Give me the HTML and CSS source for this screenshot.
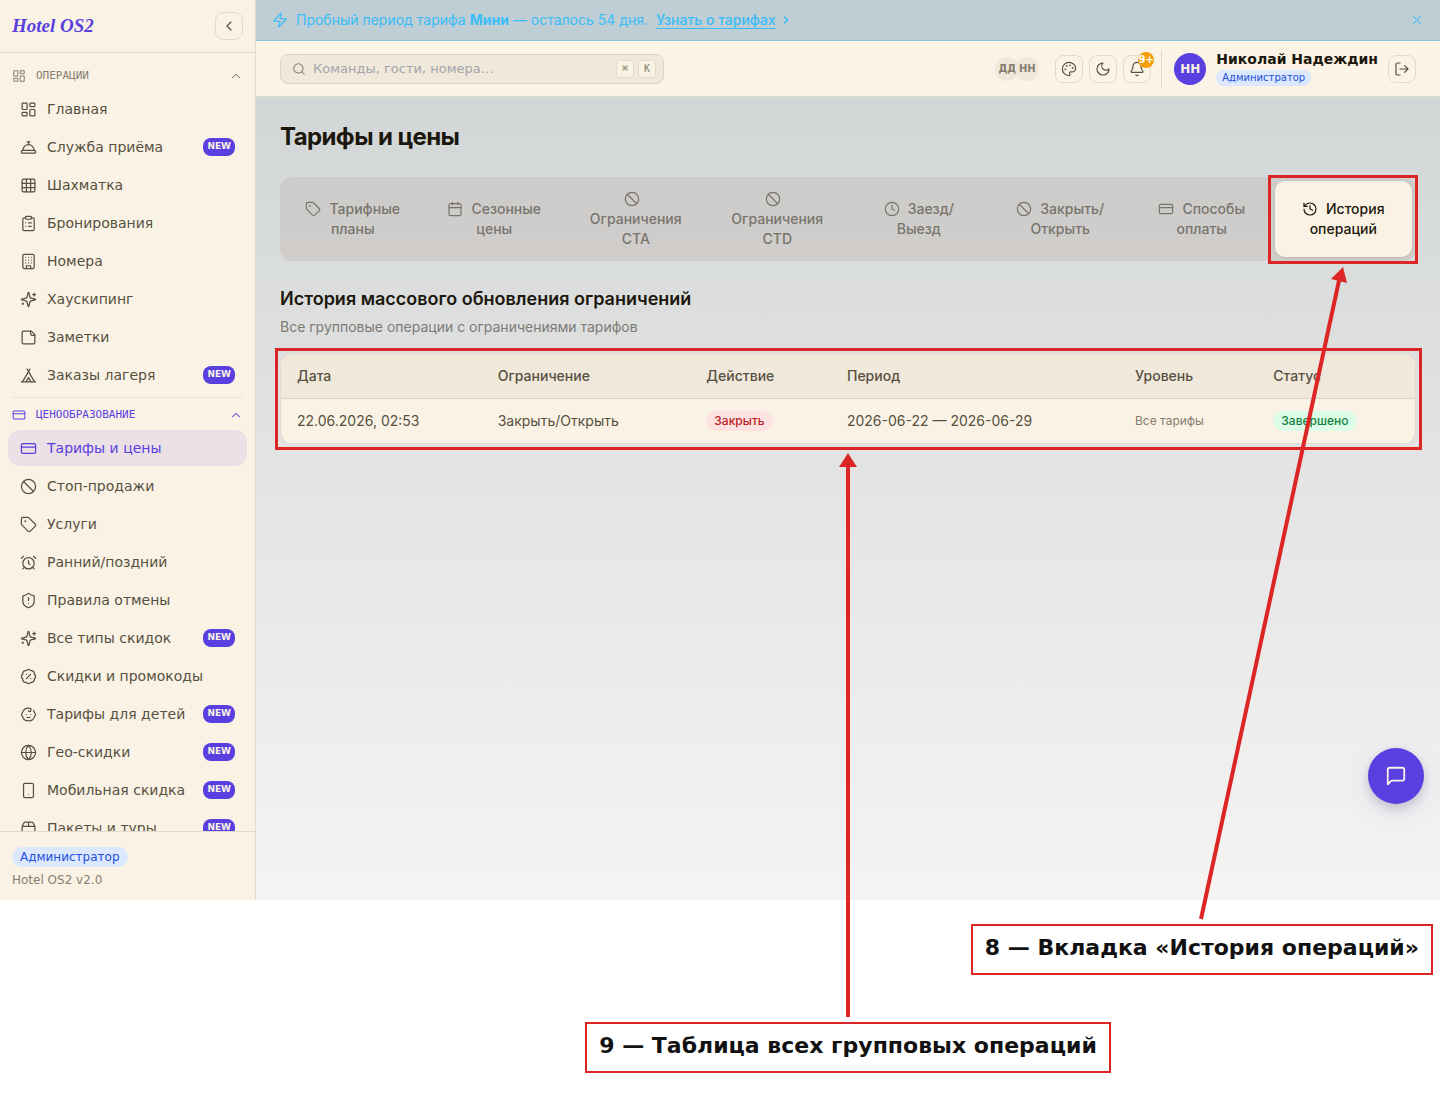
FILE: index.html
```html
<!DOCTYPE html>
<html lang="ru">
<head>
  <meta charset="UTF-8" />
  <meta name="viewport" content="width=device-width, initial-scale=1.0"/>
  <title>Тарифы и цены — Hotel OS2</title>
  <link rel="stylesheet" href="styles.css">
</head>
<body>

  <!-- Icon sprite -->
  <svg class="sprite" aria-hidden="true">
    <symbol id="i-dashboard" viewBox="0 0 24 24"><rect width="7" height="9" x="3" y="3" rx="1"/><rect width="7" height="5" x="14" y="3" rx="1"/><rect width="7" height="9" x="14" y="12" rx="1"/><rect width="7" height="5" x="3" y="16" rx="1"/></symbol>
    <symbol id="i-bell-service" viewBox="0 0 24 24"><path d="M3 20a1 1 0 0 1-1-1v-1a2 2 0 0 1 2-2h16a2 2 0 0 1 2 2v1a1 1 0 0 1-1 1Z"/><path d="M20 16a8 8 0 1 0-16 0"/><path d="M12 4v4"/><path d="M10 4h4"/></symbol>
    <symbol id="i-grid" viewBox="0 0 24 24"><rect width="18" height="18" x="3" y="3" rx="2"/><path d="M3 9h18M3 15h18M9 3v18M15 3v18"/></symbol>
    <symbol id="i-clipboard" viewBox="0 0 24 24"><rect width="8" height="4" x="8" y="2" rx="1"/><path d="M16 4h2a2 2 0 0 1 2 2v14a2 2 0 0 1-2 2H6a2 2 0 0 1-2-2V6a2 2 0 0 1 2-2h2"/><path d="M12 11h4M12 16h4M8 11h.01M8 16h.01"/></symbol>
    <symbol id="i-hotel" viewBox="0 0 24 24"><rect width="16" height="20" x="4" y="2" rx="2"/><path d="M9 22v-4h6v4M8 6h.01M16 6h.01M12 6h.01M12 10h.01M12 14h.01M16 10h.01M16 14h.01M8 10h.01M8 14h.01"/></symbol>
    <symbol id="i-sparkles" viewBox="0 0 24 24"><path d="M9.937 15.5A2 2 0 0 0 8.5 14.063l-6.135-1.582a.5.5 0 0 1 0-.962L8.5 9.936A2 2 0 0 0 9.937 8.5l1.582-6.135a.5.5 0 0 1 .963 0L14.063 8.5A2 2 0 0 0 15.5 9.937l6.135 1.581a.5.5 0 0 1 0 .964L15.5 14.063a2 2 0 0 0-1.437 1.437l-1.582 6.135a.5.5 0 0 1-.963 0z"/><path d="M20 3v4M22 5h-4M4 17v2M5 18H3"/></symbol>
    <symbol id="i-note" viewBox="0 0 24 24"><path d="M16 3H5a2 2 0 0 0-2 2v14a2 2 0 0 0 2 2h14a2 2 0 0 0 2-2V8Z"/><path d="M15 3v4a2 2 0 0 0 2 2h4"/></symbol>
    <symbol id="i-tent" viewBox="0 0 24 24"><path d="M3.500 21 14 3M20.500 21 10 3M15.500 21 12 15l-3.500 6M2 21h20"/></symbol>
    <symbol id="i-card" viewBox="0 0 24 24"><rect width="20" height="14" x="2" y="5" rx="2"/><path d="M2 10h20"/></symbol>
    <symbol id="i-ban" viewBox="0 0 24 24"><circle cx="12" cy="12" r="10"/><path d="m4.900 4.900 14.200 14.200"/></symbol>
    <symbol id="i-tag" viewBox="0 0 24 24"><path d="M12.586 2.586A2 2 0 0 0 11.172 2H4a2 2 0 0 0-2 2v7.172a2 2 0 0 0 .586 1.414l8.704 8.704a2.426 2.426 0 0 0 3.420 0l6.580-6.580a2.426 2.426 0 0 0 0-3.420z"/><circle cx="7.500" cy="7.500" r=".5" fill="currentColor"/></symbol>
    <symbol id="i-alarm" viewBox="0 0 24 24"><circle cx="12" cy="13" r="8"/><path d="M12 9v4l2 2M5 3 2 6M22 6l-3-3M6.380 18.700 4 21M17.640 18.670 20 21"/></symbol>
    <symbol id="i-shield" viewBox="0 0 24 24"><path d="M20 13c0 5-3.500 7.500-7.660 8.950a1 1 0 0 1-.67-.01C7.500 20.500 4 18 4 13V6a1 1 0 0 1 1-1c2 0 4.500-1.200 6.240-2.720a1.170 1.170 0 0 1 1.520 0C14.510 3.810 17 5 19 5a1 1 0 0 1 1 1z"/><path d="M12 8v4M12 16h.01"/></symbol>
    <symbol id="i-percent" viewBox="0 0 24 24"><path d="M3.850 8.620a4 4 0 0 1 4.780-4.770 4 4 0 0 1 6.740 0 4 4 0 0 1 4.780 4.780 4 4 0 0 1 0 6.740 4 4 0 0 1-4.770 4.780 4 4 0 0 1-6.750 0 4 4 0 0 1-4.780-4.770 4 4 0 0 1 0-6.760Z"/><path d="m15 9-6 6M9 9h.01M15 15h.01"/></symbol>
    <symbol id="i-baby" viewBox="0 0 24 24"><path d="M9 12h.01M15 12h.01M10 16c.5.3 1.200.5 2 .5s1.500-.2 2-.5"/><path d="M19 6.300a9 9 0 0 1 1.800 3.900 2 2 0 0 1 0 3.600 9 9 0 0 1-17.600 0 2 2 0 0 1 0-3.600A9 9 0 0 1 12 3c2 0 3.500 1.100 3.500 2.500s-.9 2.500-2 2.500c-.8 0-1.500-.4-1.500-1"/></symbol>
    <symbol id="i-globe" viewBox="0 0 24 24"><circle cx="12" cy="12" r="10"/><path d="M12 2a14.500 14.500 0 0 0 0 20 14.500 14.500 0 0 0 0-20M2 12h20"/></symbol>
    <symbol id="i-phone" viewBox="0 0 24 24"><rect width="14" height="20" x="5" y="2" rx="2"/><path d="M12 18h.01"/></symbol>
    <symbol id="i-package" viewBox="0 0 24 24"><path d="M12 3v6M16.760 3a2 2 0 0 1 1.800 1.100l2.230 4.479a2 2 0 0 1 .21.891V19a2 2 0 0 1-2 2H5a2 2 0 0 1-2-2V9.472a2 2 0 0 1 .211-.894L5.450 4.100A2 2 0 0 1 7.240 3zM3.054 9.013h17.893"/></symbol>
    <symbol id="i-up" viewBox="0 0 24 24"><path d="m18 15-6-6-6 6"/></symbol>
    <symbol id="i-left" viewBox="0 0 24 24"><path d="m15 18-6-6 6-6"/></symbol>
    <symbol id="i-right" viewBox="0 0 24 24"><path d="m9 18 6-6-6-6"/></symbol>
    <symbol id="i-zap" viewBox="0 0 24 24"><path d="M4 14a1 1 0 0 1-.78-1.630l9.900-10.200a.5.5 0 0 1 .86.460l-1.920 6.020A1 1 0 0 0 13 10h7a1 1 0 0 1 .78 1.630l-9.900 10.200a.5.5 0 0 1-.86-.46l1.920-6.020A1 1 0 0 0 11 14z"/></symbol>
    <symbol id="i-x" viewBox="0 0 24 24"><path d="M18 6 6 18M6 6l12 12"/></symbol>
    <symbol id="i-search" viewBox="0 0 24 24"><circle cx="11" cy="11" r="8"/><path d="m21 21-4.300-4.300"/></symbol>
    <symbol id="i-palette" viewBox="0 0 24 24"><circle cx="13.500" cy="6.500" r=".5" fill="currentColor"/><circle cx="17.500" cy="10.500" r=".5" fill="currentColor"/><circle cx="8.500" cy="7.500" r=".5" fill="currentColor"/><circle cx="6.500" cy="12.500" r=".5" fill="currentColor"/><path d="M12 2C6.500 2 2 6.500 2 12s4.500 10 10 10c.926 0 1.648-.746 1.648-1.688 0-.437-.18-.835-.437-1.125-.29-.289-.438-.652-.438-1.125a1.640 1.640 0 0 1 1.668-1.668h1.996c3.051 0 5.555-2.503 5.555-5.554C21.965 6.012 17.461 2 12 2z"/></symbol>
    <symbol id="i-moon" viewBox="0 0 24 24"><path d="M12 3a6 6 0 0 0 9 9 9 9 0 1 1-9-9Z"/></symbol>
    <symbol id="i-bell" viewBox="0 0 24 24"><path d="M10.268 21a2 2 0 0 0 3.464 0M3.262 15.326A1 1 0 0 0 4 17h16a1 1 0 0 0 .74-1.673C19.410 13.956 18 12.499 18 8A6 6 0 0 0 6 8c0 4.499-1.411 5.956-2.738 7.326"/></symbol>
    <symbol id="i-logout" viewBox="0 0 24 24"><path d="M9 21H5a2 2 0 0 1-2-2V5a2 2 0 0 1 2-2h4M16 17l5-5-5-5M21 12H9"/></symbol>
    <symbol id="i-calendar" viewBox="0 0 24 24"><path d="M8 2v4M16 2v4M3 10h18"/><rect width="18" height="18" x="3" y="4" rx="2"/></symbol>
    <symbol id="i-clock" viewBox="0 0 24 24"><circle cx="12" cy="12" r="10"/><path d="M12 6v6l4 2"/></symbol>
    <symbol id="i-history" viewBox="0 0 24 24"><path d="M3 12a9 9 0 1 0 9-9 9.750 9.750 0 0 0-6.740 2.740L3 8"/><path d="M3 3v5h5M12 7v5l4 2"/></symbol>
    <symbol id="i-chat" viewBox="0 0 24 24"><path d="M21 15a2 2 0 0 1-2 2H7l-4 4V5a2 2 0 0 1 2-2h14a2 2 0 0 1 2 2z"/></symbol>
  </svg>

  <div class="app">
    <!-- Sidebar -->
    <aside class="sidebar">
      <div class="brand">
        <span class="logo">Hotel OS2</span>
        <button class="icon-btn" type="button" aria-label="Свернуть меню"><svg class="icon"><use href="#i-left"/></svg></button>
      </div>

      <nav class="nav">
        <section class="nav-group">
          <button class="nav-head" type="button"><svg class="icon"><use href="#i-dashboard"/></svg><span>ОПЕРАЦИИ</span><svg class="icon chevron"><use href="#i-up"/></svg></button>
          <a class="nav-item" href="#"><svg class="icon"><use href="#i-dashboard"/></svg>Главная</a>
          <a class="nav-item" href="#"><svg class="icon"><use href="#i-bell-service"/></svg>Служба приёма<span class="new">NEW</span></a>
          <a class="nav-item" href="#"><svg class="icon"><use href="#i-grid"/></svg>Шахматка</a>
          <a class="nav-item" href="#"><svg class="icon"><use href="#i-clipboard"/></svg>Бронирования</a>
          <a class="nav-item" href="#"><svg class="icon"><use href="#i-hotel"/></svg>Номера</a>
          <a class="nav-item" href="#"><svg class="icon"><use href="#i-sparkles"/></svg>Хаускипинг</a>
          <a class="nav-item" href="#"><svg class="icon"><use href="#i-note"/></svg>Заметки</a>
          <a class="nav-item" href="#"><svg class="icon"><use href="#i-tent"/></svg>Заказы лагеря<span class="new">NEW</span></a>
        </section>
        <hr class="nav-line">
        <section class="nav-group">
          <button class="nav-head current" type="button"><svg class="icon"><use href="#i-card"/></svg><span>ЦЕНООБРАЗОВАНИЕ</span><svg class="icon chevron"><use href="#i-up"/></svg></button>
          <a class="nav-item active" href="#"><svg class="icon"><use href="#i-card"/></svg>Тарифы и цены</a>
          <a class="nav-item" href="#"><svg class="icon"><use href="#i-ban"/></svg>Стоп-продажи</a>
          <a class="nav-item" href="#"><svg class="icon"><use href="#i-tag"/></svg>Услуги</a>
          <a class="nav-item" href="#"><svg class="icon"><use href="#i-alarm"/></svg>Ранний/поздний</a>
          <a class="nav-item" href="#"><svg class="icon"><use href="#i-shield"/></svg>Правила отмены</a>
          <a class="nav-item" href="#"><svg class="icon"><use href="#i-sparkles"/></svg>Все типы скидок<span class="new">NEW</span></a>
          <a class="nav-item" href="#"><svg class="icon"><use href="#i-percent"/></svg>Скидки и промокоды</a>
          <a class="nav-item" href="#"><svg class="icon"><use href="#i-baby"/></svg>Тарифы для детей<span class="new">NEW</span></a>
          <a class="nav-item" href="#"><svg class="icon"><use href="#i-globe"/></svg>Гео-скидки<span class="new">NEW</span></a>
          <a class="nav-item" href="#"><svg class="icon"><use href="#i-phone"/></svg>Мобильная скидка<span class="new">NEW</span></a>
          <a class="nav-item" href="#"><svg class="icon"><use href="#i-package"/></svg>Пакеты и туры<span class="new">NEW</span></a>
        </section>
      </nav>

      <div class="sidebar-footer">
        <span class="role">Администратор</span>
        <span class="version">Hotel OS2 v2.0</span>
      </div>
    </aside>

    <div class="content">
      <!-- Trial banner -->
      <div class="banner">
        <svg class="icon"><use href="#i-zap"/></svg>
        <span>Пробный период тарифа <strong>Мини</strong> — осталось 54 дня.</span>
        <a href="#">Узнать о тарифах</a>
        <svg class="icon arrow"><use href="#i-right"/></svg>
        <button class="banner-close" type="button" aria-label="Закрыть"><svg class="icon"><use href="#i-x"/></svg></button>
      </div>

      <!-- Top bar -->
      <header class="topbar">
        <div class="search">
          <svg class="icon"><use href="#i-search"/></svg>
          <input type="text" placeholder="Команды, гости, номера…" aria-label="Поиск">
          <kbd>⌘</kbd>
          <kbd>K</kbd>
        </div>
        <div class="tools">
          <div class="online"><span>ДД</span><span>НН</span></div>
          <button class="icon-btn" type="button" aria-label="Оформление"><svg class="icon"><use href="#i-palette"/></svg></button>
          <button class="icon-btn" type="button" aria-label="Тёмная тема"><svg class="icon"><use href="#i-moon"/></svg></button>
          <button class="icon-btn bell" type="button" aria-label="Уведомления"><svg class="icon"><use href="#i-bell"/></svg><span class="count">9+</span></button>
        </div>
        <div class="user">
          <span class="avatar">НН</span>
          <div class="user-info">
            <span class="user-name">Николай Надеждин</span>
            <span class="role small">Администратор</span>
          </div>
          <button class="icon-btn" type="button" aria-label="Выйти"><svg class="icon"><use href="#i-logout"/></svg></button>
        </div>
      </header>

      <main class="main">
        <h1>Тарифы и цены</h1>

        <div class="tabs" role="tablist">
          <button class="tab" type="button" role="tab"><svg class="icon"><use href="#i-tag"/></svg>Тарифные планы</button>
          <button class="tab" type="button" role="tab"><svg class="icon"><use href="#i-calendar"/></svg>Сезонные цены</button>
          <button class="tab" type="button" role="tab"><svg class="icon"><use href="#i-ban"/></svg>Ограничения CTA</button>
          <button class="tab" type="button" role="tab"><svg class="icon"><use href="#i-ban"/></svg>Ограничения CTD</button>
          <button class="tab" type="button" role="tab"><svg class="icon"><use href="#i-clock"/></svg>Заезд/<wbr>Выезд</button>
          <button class="tab" type="button" role="tab"><svg class="icon"><use href="#i-ban"/></svg>Закрыть/<wbr>Открыть</button>
          <button class="tab" type="button" role="tab"><svg class="icon"><use href="#i-card"/></svg>Способы оплаты</button>
          <button class="tab active marked" type="button" role="tab" aria-selected="true"><svg class="icon"><use href="#i-history"/></svg>История операций</button>
        </div>

        <h2>История массового обновления ограничений</h2>
        <p class="subtitle">Все групповые операции с ограничениями тарифов</p>

        <div class="table-card marked">
          <table>
            <thead>
              <tr>
                <th class="col-date">Дата</th>
                <th class="col-limit">Ограничение</th>
                <th class="col-action">Действие</th>
                <th class="col-period">Период</th>
                <th class="col-level">Уровень</th>
                <th>Статус</th>
              </tr>
            </thead>
            <tbody>
              <tr>
                <td>22.06.2026, 02:53</td>
                <td>Закрыть/Открыть</td>
                <td><span class="chip red">Закрыть</span></td>
                <td>2026-06-22 — 2026-06-29</td>
                <td class="muted">Все тарифы</td>
                <td><span class="chip green">Завершено</span></td>
              </tr>
            </tbody>
          </table>
        </div>
      </main>
    </div>

    <button class="chat-btn" type="button" aria-label="Чат"><svg class="icon"><use href="#i-chat"/></svg></button>
  </div>

  <!-- Callouts -->
  <div class="notes">
    <div class="note note-tab">8 — Вкладка «История операций»</div>
    <div class="note note-table">9 — Таблица всех групповых операций</div>
  </div>
  <svg class="arrows" viewBox="0 0 1440 1097" aria-hidden="true">
    <path class="line" d="M848 1017V460M1201 919 1340 276"/>
    <path class="head" d="M848 453l9 14h-18zM1343 267l4 16-16-4z"/>
  </svg>

</body>
</html>
```

FILE: styles.css
```css
* {
  box-sizing: border-box;
}

body {
  position: relative;
  margin: 0;
  background: #ffffff;
  font-family: "DejaVu Sans", sans-serif;
  font-size: 14px;
  line-height: 20px;
  color: #1c170d;
}

button {
  font: inherit;
  color: inherit;
  background: none;
  border: none;
  padding: 0;
  cursor: pointer;
}

a {
  color: inherit;
  text-decoration: none;
}

.sprite {
  display: none;
}

.icon {
  flex: none;
  width: 16px;
  height: 16px;
  fill: none;
  stroke: currentColor;
  stroke-width: 1.75;
  stroke-linecap: round;
  stroke-linejoin: round;
}

.app {
  position: relative;
  display: flex;
  height: calc(100vh - 197px);
  min-height: 480px;
  background: linear-gradient(#cdd2d4, #dbdedd 33%, #e3e3e3 50%, #f5f4f2);
}

/* Sidebar */
.sidebar {
  display: flex;
  flex-direction: column;
  flex: none;
  width: 256px;
  background: #faf3e5;
  border-right: 1px solid #e2dacd;
}

.brand {
  display: flex;
  align-items: center;
  justify-content: space-between;
  flex: none;
  height: 53px;
  padding: 0 12px;
  border-bottom: 1px solid #e2dacd;
}

.logo {
  font-family: "Liberation Serif", serif;
  font-size: 19px;
  font-weight: bold;
  font-style: italic;
  color: #593ee0;
}

.icon-btn {
  display: flex;
  align-items: center;
  justify-content: center;
  width: 28px;
  height: 28px;
  border: 1px solid #e2dacd;
  border-radius: 8px;
  color: #57503f;
}

.nav {
  flex: 1;
  min-height: 0;
  overflow-y: auto;
  scrollbar-width: none;
  padding: 8px 8px 0;
}

.nav-group {
  display: flex;
  flex-direction: column;
}

.nav-head {
  display: flex;
  align-items: center;
  gap: 10px;
  height: 30px;
  padding: 0 4px;
  font-family: "DejaVu Sans Mono", monospace;
  font-size: 11px;
  color: #857d6f;
}

.nav-head .icon {
  width: 14px;
  height: 14px;
}

.nav-head .chevron {
  margin-left: auto;
}

.nav-line {
  margin: 4px 4px 2px;
  border: none;
  border-top: 1px solid #e9e2d5;
}

.nav-item {
  display: flex;
  align-items: center;
  flex: none;
  gap: 10px;
  height: 36px;
  padding: 0 12px;
  border-radius: 12px;
  color: #57503f;
}

.nav-item + .nav-item {
  margin-top: 2px;
}

.nav-item .icon {
  width: 17px;
  height: 17px;
}

.nav-head.current,
.nav-item.active {
  color: #593ee0;
}

.nav-item.active {
  background: #eae0e5;
}

.new {
  margin-left: auto;
  height: 18px;
  padding: 0 4px;
  border-radius: 8px;
  background: #593ee0;
  color: #faf3e5;
  font-size: 9px;
  font-weight: bold;
  line-height: 17px;
}

.sidebar-footer {
  display: flex;
  flex-direction: column;
  align-items: flex-start;
  gap: 5px;
  flex: none;
  padding: 15px 12px 12px;
  border-top: 1px solid #e2dacd;
  font-size: 12px;
  line-height: 16px;
  color: #857d6f;
}

.role {
  padding: 2px 8px;
  border-radius: 10px;
  background: #dbe8fd;
  color: #2450dc;
  font-size: 12px;
  line-height: 16px;
}

.role.small {
  padding: 0 6px;
  font-size: 10px;
}

/* Content */
.content {
  display: flex;
  flex-direction: column;
  flex: 1;
  min-width: 0;
}

.banner {
  display: flex;
  align-items: center;
  gap: 8px;
  height: 41px;
  padding: 0 16px;
  background: #bfcdd4;
  border-bottom: 1px solid #8cc5df;
  font-family: Inter, sans-serif;
  color: #38bdf8;
}

.banner a {
  text-decoration: underline;
  text-underline-offset: 3px;
  font-weight: 500;
}

.banner .arrow {
  width: 12px;
  height: 12px;
  margin-left: -4px;
  stroke-width: 3;
}

.banner-close {
  display: flex;
  margin-left: auto;
}

.banner-close .icon {
  width: 14px;
  height: 14px;
}

.topbar {
  display: flex;
  align-items: center;
  height: 56px;
  padding: 0 24px;
  background: #fbf3e5;
  border-bottom: 1px solid #e2dacd;
}

.search {
  display: flex;
  align-items: center;
  gap: 4px;
  width: 384px;
  height: 30px;
  padding: 0 7px 0 11px;
  border: 1px solid #dbd3c6;
  border-radius: 8px;
  background: #f0e8db;
  color: #857d6f;
}

.search .icon {
  width: 14px;
  height: 14px;
}

.search input {
  flex: 1;
  min-width: 0;
  padding: 0 0 0 3px;
  border: none;
  outline: none;
  background: none;
  font-family: inherit;
  font-size: 13px;
}

.search input::placeholder {
  color: #a2a5ab;
}

kbd {
  width: 18px;
  height: 18px;
  border: 1px solid #e2dacd;
  border-radius: 4px;
  background: #faf3e5;
  font-family: "DejaVu Sans Mono", monospace;
  font-size: 10px;
  line-height: 16px;
  text-align: center;
}

.tools {
  display: flex;
  align-items: center;
  gap: 6px;
  margin-left: auto;
  padding-right: 10px;
}

.online {
  display: flex;
  margin-right: 10px;
}

.online span {
  width: 24px;
  height: 24px;
  overflow: hidden;
  border-radius: 50%;
  background: #f0e8db;
  color: #857d6f;
  font-size: 10px;
  font-weight: bold;
  line-height: 24px;
  text-align: center;
}

.online span + span {
  margin-left: -4px;
}

.bell {
  position: relative;
}

.count {
  position: absolute;
  top: -4px;
  right: -4px;
  width: 16px;
  height: 16px;
  border-radius: 50%;
  background: #f59e0b;
  color: #ffffff;
  font-size: 10px;
  font-weight: bold;
  line-height: 16px;
}

.user {
  display: flex;
  align-items: center;
  gap: 10px;
  padding-left: 12px;
  border-left: 1px solid #e2dacd;
}

.avatar {
  width: 32px;
  height: 32px;
  border-radius: 50%;
  background: #593ee0;
  color: #faf3e5;
  font-size: 12px;
  font-weight: bold;
  line-height: 32px;
  text-align: center;
}

.user-info {
  display: flex;
  flex-direction: column;
  align-items: flex-start;
  gap: 2px;
  padding-bottom: 2px;
}

.user-name {
  font-weight: bold;
  line-height: 18px;
}

.main {
  padding: 24px;
  font-family: Inter, sans-serif;
}

h1 {
  margin: 0 0 24px;
  font-size: 24px;
  line-height: 32px;
  letter-spacing: -0.025em;
}

.tabs {
  display: grid;
  grid-template-columns: repeat(8, 1fr);
  gap: 4px;
  margin-bottom: 24px;
  padding: 4px;
  border-radius: 12px;
  background: rgba(190, 180, 175, 0.36);
}

.tab {
  padding: 8px 16px;
  border-radius: 10px;
  font-weight: 500;
  color: #77746c;
}

.tab .icon {
  margin: 0 8px 2px 0;
  vertical-align: middle;
}

.tab.active {
  background: #faf3e5;
  color: #1c170d;
  box-shadow: 0 1px 3px rgba(0, 0, 0, 0.12);
}

h2 {
  margin: 0 0 4px;
  font-size: 18px;
  font-weight: 600;
  line-height: 28px;
}

.subtitle {
  margin: 0 0 16px;
  color: #7d7a74;
}

.table-card {
  border: 1px solid #e0dbd1;
  border-radius: 12px;
  background: #faf3e5;
}

table {
  width: 100%;
  border-collapse: separate;
  border-spacing: 0;
}

th,
td {
  padding: 12px 16px;
  text-align: left;
  white-space: nowrap;
  color: #57503f;
}

th {
  border-bottom: 1px solid #dbd3c6;
  background: #f0e8db;
  font-weight: 500;
}

th:first-child {
  border-top-left-radius: 11px;
}

th:last-child {
  border-top-right-radius: 11px;
}

.col-date {
  width: 17.7%;
}

.col-limit {
  width: 18.4%;
}

.col-action {
  width: 12.4%;
}

.col-period {
  width: 25.4%;
}

.col-level {
  width: 12.2%;
}

td.muted {
  font-size: 12px;
  color: #857d6f;
}

.chip {
  display: inline-block;
  padding: 2px 8px;
  border-radius: 10px;
  font-size: 12px;
  font-weight: 500;
  line-height: 16px;
  vertical-align: top;
}

.chip.red {
  background: #fee2e2;
  color: #b91c1c;
}

.chip.green {
  background: #dcfce7;
  color: #15803d;
}

.chat-btn {
  position: absolute;
  right: 16px;
  bottom: 96px;
  display: flex;
  align-items: center;
  justify-content: center;
  width: 56px;
  height: 56px;
  border-radius: 50%;
  background: #593ee0;
  color: #faf3e5;
  box-shadow: 0 8px 24px rgba(89, 62, 224, 0.12), 0 4px 10px rgba(0, 0, 0, 0.16);
}

.chat-btn .icon {
  width: 22px;
  height: 22px;
  stroke-width: 2;
}

/* Callouts */
.marked {
  position: relative;
}

.marked::after {
  content: "";
  position: absolute;
  inset: -6px -7px -7px -6px;
  border: 3px solid #dc2626;
}

.tab.marked::after {
  inset: -6px -6px -7px -7px;
}

.notes {
  display: flex;
  flex-direction: column;
  gap: 47px;
  margin-left: 256px;
  padding: 24px 7px;
}

.note {
  padding: 8px 12px 12px;
  border: 2px solid #dc2626;
  color: #111111;
  font-size: 22px;
  font-weight: bold;
  line-height: 27px;
}

.note-tab {
  align-self: flex-end;
}

.note-table {
  align-self: center;
}

.arrows {
  position: absolute;
  top: 0;
  left: 0;
  width: 100%;
  pointer-events: none;
}

.arrows .line {
  fill: none;
  stroke: #dc2626;
  stroke-width: 4;
}

.arrows .head {
  fill: #dc2626;
}
```
